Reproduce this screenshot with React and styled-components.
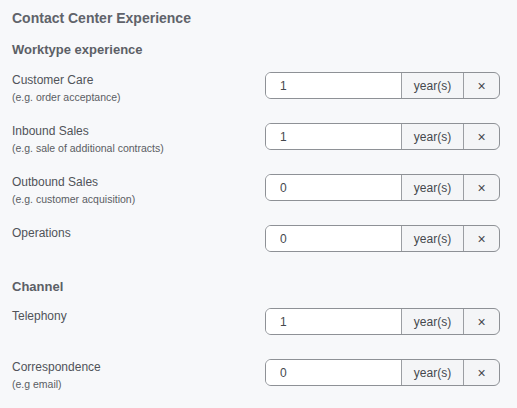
import React from "react";
import styled, { createGlobalStyle } from "styled-components";

const GlobalStyle = createGlobalStyle`
  html, body {
    margin: 0;
    padding: 0;
    background: #f7f8fa;
  }
  body {
    font-family: "Liberation Sans", Arial, sans-serif;
  }
`;

const worktypes = [
  { label: "Customer Care", hint: "(e.g. order acceptance)", value: "1" },
  { label: "Inbound Sales", hint: "(e.g. sale of additional contracts)", value: "1" },
  { label: "Outbound Sales", hint: "(e.g. customer acquisition)", value: "0" },
  { label: "Operations", value: "0" },
];

const channels = [
  { label: "Telephony", value: "1" },
  { label: "Correspondence", hint: "(e.g email)", value: "0" },
];

const ExperienceRow = ({ label, hint, value }) => (
  <Row>
    <LabelCol>
      <Label>{label}</Label>
      {hint && <Hint>{hint}</Hint>}
    </LabelCol>
    <InputGroup>
      <NumberInput defaultValue={value} />
      <Addon>year(s)</Addon>
      <ClearButton type="button">×</ClearButton>
    </InputGroup>
  </Row>
);

const App = () => {
  return (
    <Page>
      <GlobalStyle />
      <Title>Contact Center Experience</Title>
      <SectionTitle>Worktype experience</SectionTitle>
      <List>
        {worktypes.map((w) => (
          <ExperienceRow key={w.label} {...w} />
        ))}
      </List>
      <SectionTitle $spaced>Channel</SectionTitle>
      <List>
        {channels.map((c) => (
          <ExperienceRow key={c.label} {...c} />
        ))}
      </List>
    </Page>
  );
};

export default App;

const Page = styled.div`
  padding: 8px 17px 0 12px;
  color: #55585e;
`;

const Title = styled.h2`
  margin: 0 0 13px;
  font-size: 14px;
  line-height: 20px;
  font-weight: 700;
  color: #60636a;
`;

const SectionTitle = styled.h3`
  margin: ${(p) => (p.$spaced ? "21px 0 12px" : "0 0 13px")};
  font-size: 13px;
  line-height: 18px;
  font-weight: 700;
  color: #5c5f66;
`;

const List = styled.div`
  display: flex;
  flex-direction: column;
  gap: 19px;
`;

const Row = styled.div`
  display: grid;
  grid-template-columns: 1fr 235px;
  height: 32px;
  align-items: start;
`;

const LabelCol = styled.div`
  display: flex;
  flex-direction: column;
`;

const Label = styled.span`
  font-size: 12px;
  line-height: 16px;
  color: #505359;
`;

const Hint = styled.span`
  margin-top: 2px;
  font-size: 10.5px;
  line-height: 14px;
  color: #5a5d63;
`;

const InputGroup = styled.div`
  display: flex;
  height: 27px;
  box-sizing: border-box;
  border: 1px solid #8e9196;
  border-radius: 6px;
  overflow: hidden;
  background: #f4f5f7;
`;

const NumberInput = styled.input`
  width: 135px;
  flex: none;
  border: none;
  outline: none;
  padding: 0 0 0 14px;
  background: #fff;
  font-family: inherit;
  font-size: 12px;
  color: #45484d;
  box-sizing: border-box;
`;

const Addon = styled.span`
  width: 61px;
  flex: none;
  display: flex;
  align-items: center;
  justify-content: center;
  border-left: 1px solid #9b9ea3;
  font-size: 12px;
  color: #45484d;
`;

const ClearButton = styled.button`
  flex: 1;
  border: none;
  border-left: 1px solid #9b9ea3;
  background: transparent;
  padding: 0;
  font-family: inherit;
  font-size: 14px;
  color: #45484d;
  cursor: pointer;
`;
